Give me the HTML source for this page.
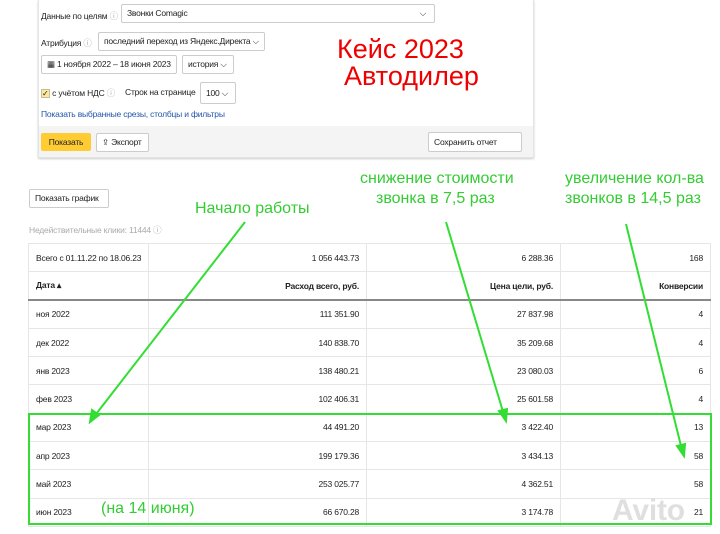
<!DOCTYPE html>
<html><head><meta charset="utf-8"><style>
*{margin:0;padding:0;box-sizing:border-box}
body{width:720px;height:534px;background:#fff;position:relative;overflow:hidden;font-family:"Liberation Sans",sans-serif;font-size:8.5px;color:#222;letter-spacing:-0.2px}
.a{position:absolute;white-space:nowrap}
.box{position:absolute;border:1px solid #ccc;border-radius:2px;background:#fff;padding:0 5px;height:19px;line-height:17px;font-size:8.5px;white-space:nowrap;overflow:hidden}
.g{color:#3c3;font-size:16px;position:absolute;white-space:nowrap;letter-spacing:0}
.r{color:#e00;font-size:27px;position:absolute;white-space:nowrap;letter-spacing:0}
table{position:absolute;left:28px;top:243px;border-collapse:collapse;width:683px;table-layout:fixed}
td{border:1px solid #e6e6e6;height:28.3px;padding:0 7px;font-size:8.5px;text-align:right;white-space:nowrap}
td:first-child{text-align:left}
tr.h td{font-weight:bold;border-bottom:2px solid #888}
</style></head><body>
<div class="a" style="left:38px;top:0;width:496px;height:158px;border:1px solid #e4e4e4;border-top:none;box-shadow:0 1px 2px #ccc"></div>
<div class="a" style="left:39px;top:126px;width:494px;height:31px;background:#f4f4f4"></div>
<div class="a" style="left:41px;top:10px">Данные по целям <span style="color:#aaa">ⓘ</span></div>
<div class="box" style="left:121px;top:4px;width:314px">Звонки Comagic<span style="position:absolute;right:8px">⌵</span></div>
<div class="a" style="left:41px;top:37px">Атрибуция <span style="color:#aaa">ⓘ</span></div>
<div class="box" style="left:98px;top:32px;width:167px">последний переход из Яндекс.Директа ⌵</div>
<div class="box" style="left:41px;top:55px;width:136px">▦ 1 ноября 2022 – 18 июня 2023</div>
<div class="box" style="left:182px;top:55px;width:52px">история ⌵</div>
<div class="a" style="left:41px;top:87px"><span style="display:inline-block;width:9px;height:9px;background:#fde8a0;border:1px solid #cb9;font-size:8px;line-height:7px">✓</span> с учётом НДС <span style="color:#aaa">ⓘ</span></div>
<div class="a" style="left:125px;top:87px">Строк на странице</div>
<div class="box" style="left:200px;top:82px;width:36px;height:22px;line-height:20px">100 ⌵</div>
<div class="a" style="left:41px;top:109px;color:#2255aa">Показать выбранные срезы, столбцы и фильтры</div>
<div class="a" style="left:41px;top:133px;width:50px;height:18px;background:#fc3;border-radius:2px;line-height:18px;text-align:center">Показать</div>
<div class="box" style="left:96px;top:133px;width:53px">⇪ Экспорт</div>
<div class="box" style="left:428px;top:132px;width:94px;height:20px;line-height:18px">Сохранить отчет</div>
<div class="r" style="left:337px;top:34px">Кейс 2023</div>
<div class="r" style="left:344px;top:61px">Автодилер</div>
<div class="box" style="left:29px;top:189px;width:80px;line-height:17px">Показать график</div>
<div class="a" style="left:29px;top:224px;color:#aaa">Недействительные клики: 11444 ⓘ</div>
<table>
<col style="width:120px"><col style="width:218px"><col style="width:194px"><col>
<tr><td>Всего с 01.11.22 по 18.06.23</td><td>1 056 443.73</td><td>6 288.36</td><td>168</td></tr>
<tr class="h"><td>Дата ▴</td><td>Расход всего, руб.</td><td>Цена цели, руб.</td><td>Конверсии</td></tr>
<tr><td>ноя 2022</td><td>111 351.90</td><td>27 837.98</td><td>4</td></tr>
<tr><td>дек 2022</td><td>140 838.70</td><td>35 209.68</td><td>4</td></tr>
<tr><td>янв 2023</td><td>138 480.21</td><td>23 080.03</td><td>6</td></tr>
<tr><td>фев 2023</td><td>102 406.31</td><td>25 601.58</td><td>4</td></tr>
<tr><td>мар 2023</td><td>44 491.20</td><td>3 422.40</td><td>13</td></tr>
<tr><td>апр 2023</td><td>199 179.36</td><td>3 434.13</td><td>58</td></tr>
<tr><td>май 2023</td><td>253 025.77</td><td>4 362.51</td><td>58</td></tr>
<tr><td>июн 2023</td><td>66 670.28</td><td>3 174.78</td><td>21</td></tr>
</table>
<div class="a" style="left:28px;top:413px;width:684px;height:112px;border:2px solid #3d3"></div>
<div class="g" style="left:360px;top:170px">снижение стоимости</div>
<div class="g" style="left:376px;top:190px">звонка в 7,5 раз</div>
<div class="g" style="left:565px;top:170px">увеличение кол-ва</div>
<div class="g" style="left:565px;top:190px">звонков в 14,5 раз</div>
<div class="g" style="left:195px;top:200px">Начало работы</div>
<div class="g" style="left:101px;top:500px">(на 14 июня)</div>
<div class="a" style="left:612px;top:494px;color:rgba(210,210,210,.7);font-size:30px;font-weight:bold">Avito</div>
<svg class="a" style="left:0;top:0" width="720" height="534">
<g stroke="#3d3" stroke-width="2" fill="#3d3">
<line x1="245" y1="222" x2="93" y2="418"/><polygon points="90,422 92,410 99,415"/>
<line x1="446" y1="222" x2="504" y2="415"/><polygon points="506,421 499,411 507,409"/>
<line x1="626" y1="224" x2="682" y2="450"/><polygon points="684,456 677,446 685,444"/>
</g></svg>
</body></html>
